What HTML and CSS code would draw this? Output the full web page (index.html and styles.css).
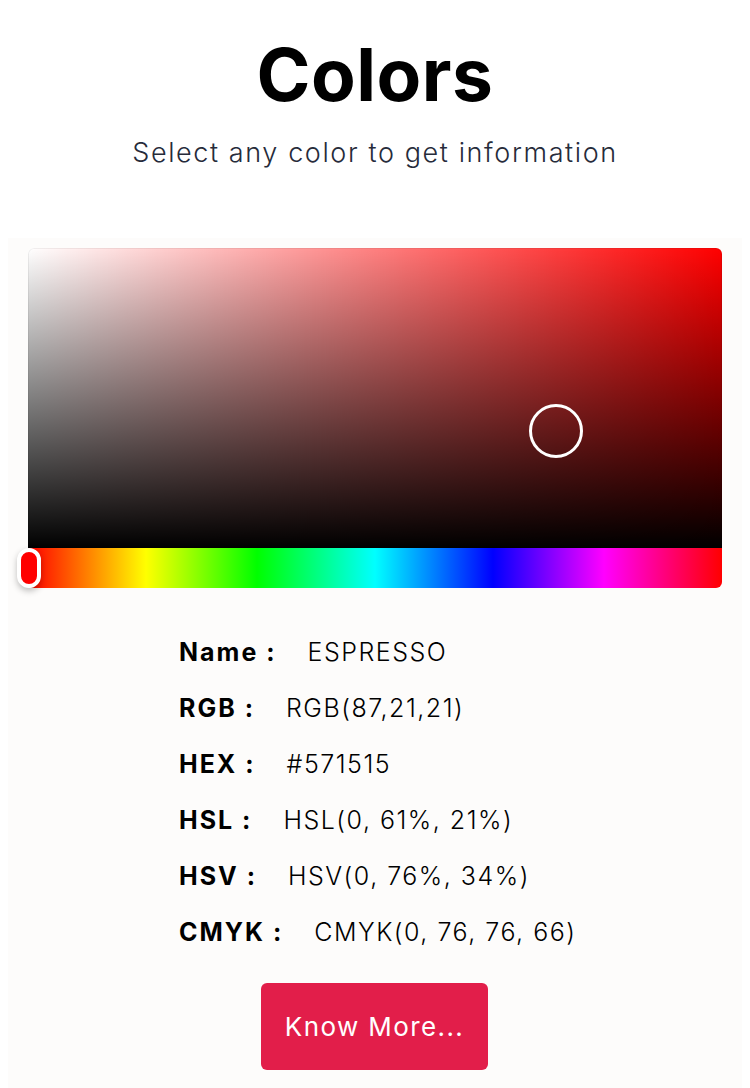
FILE: index.html
```html
<!DOCTYPE html>
<html>
<head>
<meta charset="utf-8">
<link rel="stylesheet" href="styles.css">
</head>
<body>
<header class="head">
  <h1 class="title">Colors</h1>
  <p class="subtitle">Select any color to get information</p>
</header>
<main class="panel">
  <div class="picker">
    <div class="saturation">
      <span class="sat-pointer"></span>
    </div>
    <div class="hue">
      <span class="hue-pointer"></span>
    </div>
  </div>
  <dl class="info">
    <div class="row"><dt>Name :</dt><dd>ESPRESSO</dd></div>
    <div class="row"><dt>RGB :</dt><dd>RGB(87,21,21)</dd></div>
    <div class="row"><dt>HEX :</dt><dd>#571515</dd></div>
    <div class="row"><dt>HSL :</dt><dd>HSL(0, 61%, 21%)</dd></div>
    <div class="row"><dt>HSV :</dt><dd>HSV(0, 76%, 34%)</dd></div>
    <div class="row"><dt>CMYK :</dt><dd>CMYK(0, 76, 76, 66)</dd></div>
  </dl>
  <div class="actions"><button class="more">Know More...</button></div>
</main>
</body>
</html>
```
FILE: styles.css
```css
html, body {
  margin: 0;
  padding: 0;
  background: #ffffff;
}
body {
  padding: 0 8px;
  font-family: Inter, "Noto Sans", sans-serif;
  color: #000;
}
.head {
  display: flex;
  flex-direction: column;
  align-items: center;
  padding-top: 33px;
  height: 238px;
  box-sizing: border-box;
}
.title {
  margin: 0;
  font-size: 73px;
  font-weight: 700;
  line-height: 84px;
  letter-spacing: 0.5px;
}
.subtitle {
  margin: 19px 0 0;
  font-size: 27px;
  font-weight: 300;
  color: #262b3a;
  line-height: 34px;
  letter-spacing: 1.6px;
}
.panel {
  background: #fdfcfb;
  padding: 10px 20px 18px;
  min-height: 850px;
  box-sizing: border-box;
}
.picker {
  display: flex;
  flex-direction: column;
}
.saturation {
  position: relative;
  height: 300px;
  border-radius: 6px 6px 0 0;
  background-color: #ff0000;
  background-image: linear-gradient(to top, #000, rgba(0,0,0,0)), linear-gradient(to right, #fff, rgba(255,255,255,0));
  box-shadow: inset 0 0 0 1px rgba(0,0,0,0.06);
}
.sat-pointer {
  position: absolute;
  left: 501px;
  top: 156px;
  width: 54px;
  height: 54px;
  box-sizing: border-box;
  border: 3px solid #fff;
  border-radius: 50%;
}
.hue {
  position: relative;
  height: 40px;
  border-radius: 0 0 6px 6px;
  background: linear-gradient(to right, #f00 0%, #ff0 17%, #0f0 33%, #0ff 50%, #00f 67%, #f0f 83%, #f00 100%);
}
.hue-pointer {
  position: absolute;
  left: -11px;
  top: 0;
  width: 24px;
  height: 40px;
  box-sizing: border-box;
  border: 4px solid #fff;
  border-radius: 12px;
  background: #ff0000;
  box-shadow: 0 3px 6px rgba(0,0,0,0.25);
}
.info {
  margin: 47px 0 0 151px;
  display: flex;
  flex-direction: column;
  gap: 22px;
}
.row {
  display: flex;
  align-items: baseline;
  height: 34px;
  line-height: 34px;
  font-size: 25px;
}
.row dt {
  font-weight: 700;
  letter-spacing: 2px;
  margin-right: 31px;
}
.row dd {
  margin: 0;
  font-weight: 300;
  letter-spacing: 1.5px;
}
.actions {
  display: flex;
  justify-content: center;
  margin-top: 34px;
}
.more {
  width: 227px;
  height: 87px;
  border: none;
  border-radius: 6px;
  background: #e21e4a;
  color: #fff;
  font-family: Inter, "Noto Sans", sans-serif;
  font-size: 26px;
  font-weight: 400;
  letter-spacing: 1.4px;
  margin-right: 1px;
}
```
